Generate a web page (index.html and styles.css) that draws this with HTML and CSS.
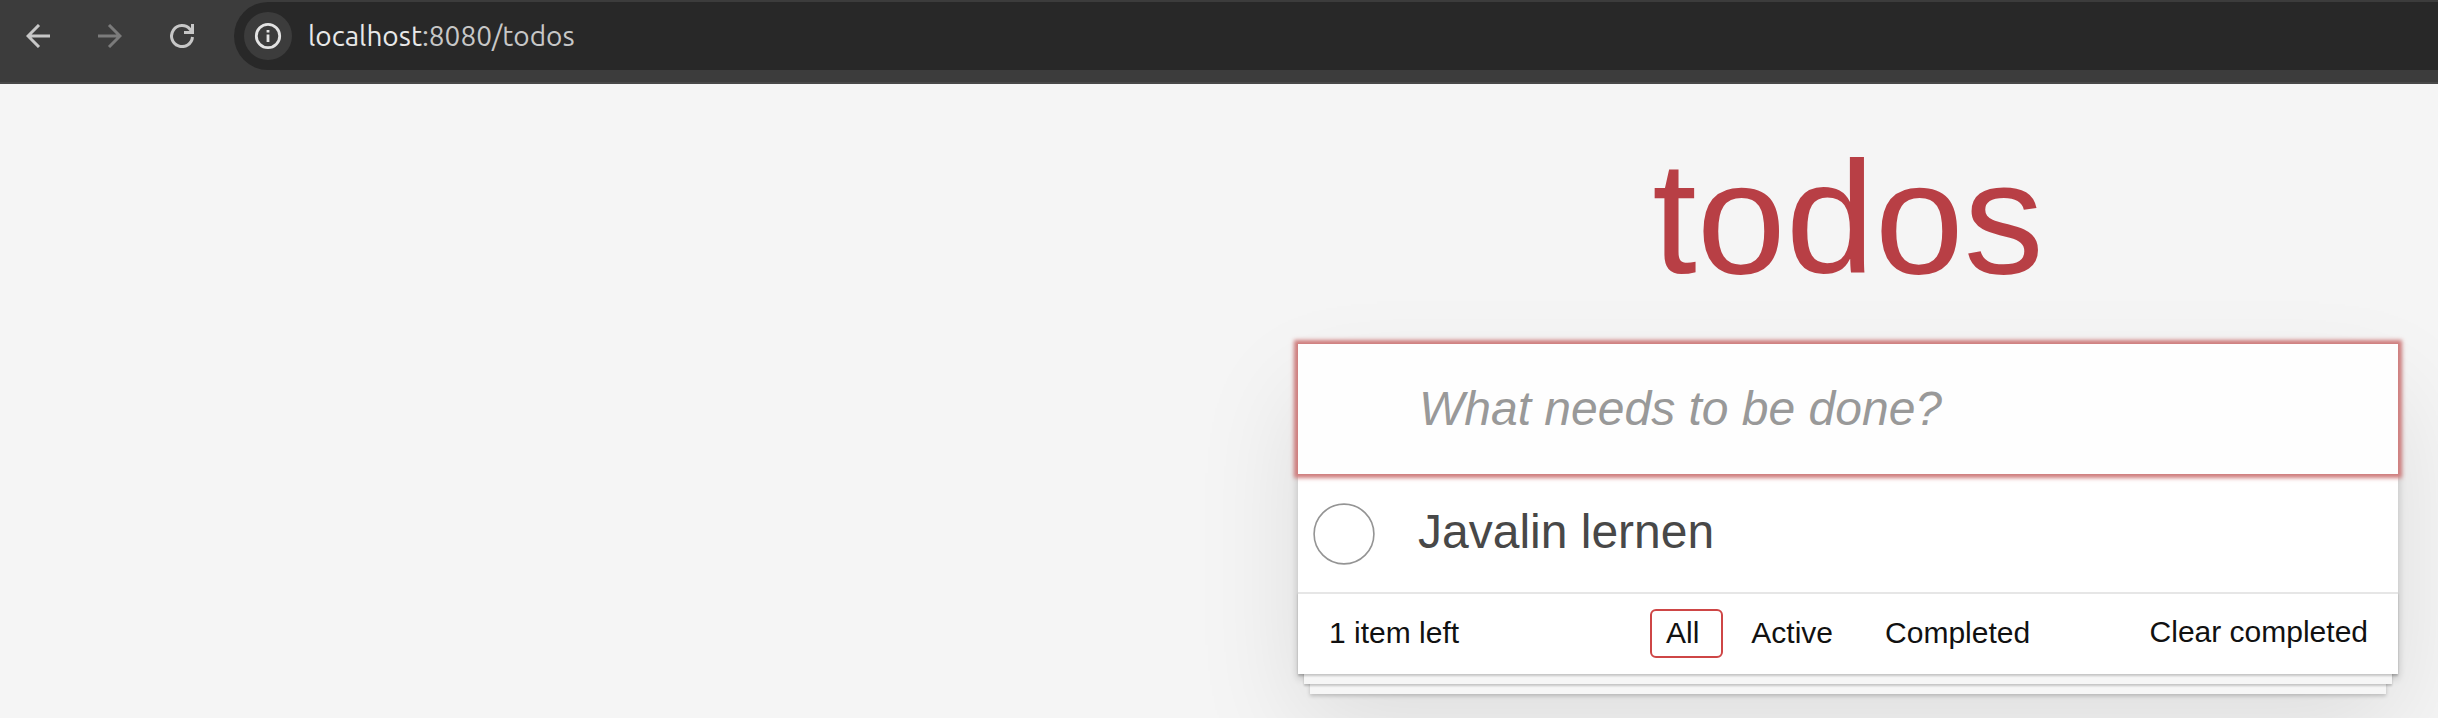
FILE: index.html
```html
<!DOCTYPE html>
<html lang="en">
<head>
<meta charset="utf-8">
<title>todos</title>
<link rel="stylesheet" href="styles.css">
</head>
<body>
<header class="toolbar">
  <div class="nav-buttons">
    <svg class="icon" viewBox="0 0 24 24"><path d="M24 12H2.500M13 1L2 12l11 11"/></svg>
    <svg class="icon icon-disabled" viewBox="0 0 24 24"><path d="M0 12h21.500M11 1l11 11-11 11"/></svg>
    <svg class="icon" viewBox="0 0 24 24"><path d="M22.500 13A10.500 10.500 0 1 1 20 5.200L22 8M22.500 0v8.500H14"/></svg>
  </div>
  <div class="address">
    <span class="info"><svg class="info-icon" viewBox="0 0 28 28"><circle cx="14" cy="14" r="11.700"/><path d="M14 12.500v7.500M14 8v2.500"/></svg></span>
    <span class="url"><span class="host">localhost</span>:8080/todos</span>
  </div>
</header>
<main class="page">
  <h1 class="title">todos</h1>
  <section class="todoapp">
    <input class="new-todo" placeholder="What needs to be done?">
    <ul class="todo-list">
      <li class="todo">
        <svg class="toggle" viewBox="0 0 62 62"><circle cx="31" cy="31" r="29.900"/></svg>
        <label class="label">Javalin lernen</label>
      </li>
    </ul>
    <footer class="footer">
      <span class="count">1 item left</span>
      <nav class="filters">
        <a class="filter selected">All</a>
        <a class="filter">Active</a>
        <a class="filter">Completed</a>
      </nav>
      <button class="clear">Clear completed</button>
    </footer>
  </section>
</main>
</body>
</html>
```
FILE: styles.css
```css
* { box-sizing: border-box; }

body {
  margin: 0;
  height: 718px;
  overflow: hidden;
  background: #f5f5f5;
  color: #111;
  font-family: "Liberation Sans", Arial, sans-serif;
}

.toolbar {
  display: flex;
  height: 84px;
  padding-top: 2px;
  background: #3c3c3c;
  border-bottom: 2px solid #484848;
}

.nav-buttons {
  display: flex;
  align-items: center;
  gap: 48px;
  width: 234px;
  height: 68px;
  padding-left: 26px;
}

.icon {
  width: 24px;
  height: 24px;
  fill: none;
  stroke: #c7c7c7;
  stroke-width: 3;
}

.icon-disabled { stroke: #7b7b7b; }

.address {
  display: flex;
  flex: 1;
  align-items: center;
  height: 68px;
  padding-left: 10px;
  border-radius: 34px 0 0 34px;
  background: #282828;
}

.info {
  display: grid;
  place-items: center;
  width: 48px;
  height: 48px;
  border-radius: 50%;
  background: #3c3c3c;
}

.info-icon {
  width: 28px;
  height: 28px;
  fill: none;
  stroke: #e3e3e3;
  stroke-width: 2.800;
}

.url {
  margin-left: 16px;
  padding-bottom: 2px;
  color: #c7c7c7;
  font-family: Ubuntu, "Noto Sans", sans-serif;
  font-size: 28px;
}

.host { color: #e8e8e8; }

.page {
  width: 1100px;
  margin-left: 1298px;
}

.title {
  margin: 0;
  height: 260px;
  padding-top: 42px;
  color: #b83f45;
  font-size: 160px;
  font-weight: 400;
  line-height: 184px;
  text-align: center;
}

.todoapp {
  position: relative;
  background: #fff;
  box-shadow: 0 4px 8px rgba(0, 0, 0, .2), 0 50px 100px rgba(0, 0, 0, .1);
}

.new-todo {
  position: relative;
  z-index: 2;
  display: block;
  width: 100%;
  height: 130px;
  padding: 31px 32px 33px 121px;
  border: 0;
  outline: 0;
  background: #fefefe;
  box-shadow: 0 0 4px 4px #cf7d7d;
  font: 48px "Liberation Sans", Arial, sans-serif;
}

.new-todo::placeholder {
  color: #999;
  font-style: italic;
}

.todo-list {
  margin: 0;
  padding: 0;
  list-style: none;
}

.todo {
  display: flex;
  align-items: center;
  height: 118px;
  padding: 0 0 3px 15px;
}

.toggle {
  width: 62px;
  height: 62px;
  margin-top: 4px;
  fill: none;
  stroke: #949494;
  stroke-width: 1.600;
}

.label {
  margin-left: 43px;
  color: #484848;
  font-size: 48px;
  line-height: 58px;
}

.footer {
  position: relative;
  display: flex;
  align-items: flex-start;
  height: 82px;
  padding: 15px 30px;
  border-top: 2px solid #e6e6e6;
  box-shadow: 0 2px 2px rgba(0, 0, 0, .2),
    0 16px 0 -6px #f6f6f6,
    0 18px 2px -6px rgba(0, 0, 0, .2),
    0 32px 0 -12px #f6f6f6,
    0 34px 4px -12px rgba(0, 0, 0, .2);
  font-size: 30px;
}

.count {
  width: 322px;
  padding: 5px 0 0 1px;
  line-height: 38px;
}

.filters {
  display: flex;
  gap: 12px;
}

.filter {
  height: 49px;
  padding: 5px 22px 0 14px;
  border: 2px solid transparent;
  border-radius: 6px;
  line-height: 34px;
}

.selected { border-color: #ce4646; }

.clear {
  margin: 4px 0 0 auto;
  padding: 0;
  border: 0;
  background: none;
  color: #111;
  font: 30px/38px "Liberation Sans", Arial, sans-serif;
}
```
